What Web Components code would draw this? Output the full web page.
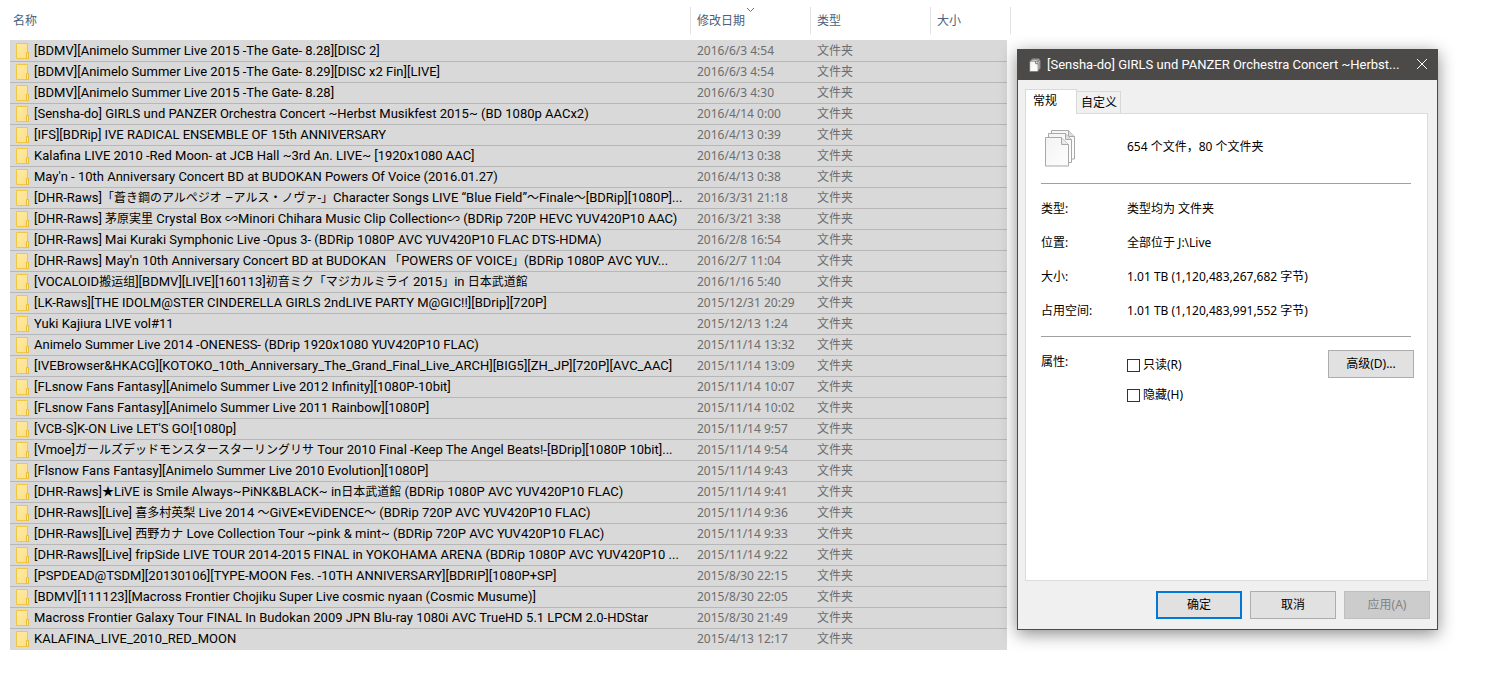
<!DOCTYPE html>
<html lang="zh-CN">
<head>
<meta charset="utf-8">
<meta name="viewport" content="width=device-width, initial-scale=1">
<title>Live</title>
<style>
  body {
    margin: 0;
    background: #fff;
    color: #000;
    font: 12px/20px "Noto Sans", "Noto Sans CJK SC", sans-serif;
  }
</style>
</head>
<body>
<explorer-desktop>
  <file-list></file-list>
  <property-sheet slot="dialog">
    <span slot="title">[Sensha-do] GIRLS und PANZER Orchestra Concert ~Herbst...</span>
    <property-row summary><files-icon slot="label" size="38"></files-icon>654 个文件，80 个文件夹</property-row>
    <hr>
    <property-row><span slot="label">类型:</span>类型均为 文件夹</property-row>
    <property-row><span slot="label">位置:</span>全部位于 J:\Live</property-row>
    <property-row><span slot="label">大小:</span>1.01 TB (1,120,483,267,682 字节)</property-row>
    <property-row><span slot="label">占用空间:</span>1.01 TB (1,120,483,991,552 字节)</property-row>
    <hr>
    <attribute-group></attribute-group>
    <push-button slot="actions" primary>确定</push-button>
    <push-button slot="actions">取消</push-button>
    <push-button slot="actions" disabled>应用(A)</push-button>
  </property-sheet>
</explorer-desktop>

<script>
const define = (name, html, setup) => customElements.define(name, class extends HTMLElement {
  constructor() {
    super();
    this.attachShadow({ mode: 'open' }).innerHTML = html;
  }
  connectedCallback() {
    if (setup && !this.ready) { this.ready = true; setup(this, this.shadowRoot); }
  }
});

define('explorer-desktop', `
  <style>
    :host { display: flex; align-items: flex-start; gap: 10px; padding: 0 57px 39px 10px; }
    main { flex: 1; min-width: 0; }
    aside { flex: 0 1 421px; min-width: 0; padding-top: 49px; }
  </style>
  <main><slot></slot></main>
  <aside><slot name="dialog"></slot></aside>
`);

define('folder-icon', `
  <style>
    :host { display: block; flex: none; width: 13px; height: 16px; }
    svg { display: block; }
  </style>
  <svg width="13" height="16" viewBox="0 0 13 16">
    <defs><linearGradient id="g" x1="0" y1="0" x2="1" y2="1">
      <stop offset="0" stop-color="#ffeaa4"/><stop offset="1" stop-color="#fddf86"/>
    </linearGradient></defs>
    <path d="M.5.5h11v9h1v6H.5z" fill="url(#g)" stroke="#efc742"/>
    <path d="M10.500 15.500v-6h2v6z" fill="#ffe9a2" stroke="#e9bd35"/>
  </svg>
`);

define('files-icon', `
  <style>
    :host { display: block; flex: none; --line: #a8a8a8; --weight: 1; }
    :host([small]) { --line: #5c5a58; --weight: 2; }
    svg { display: block; }
    g { stroke: var(--line); stroke-width: var(--weight); }
  </style>
  <svg viewBox="0 0 38 38">
    <defs><linearGradient id="p" x1="0" y1="0" x2="1" y2="1">
      <stop offset="0" stop-color="#f3f3f3"/><stop offset="1" stop-color="#fefefe"/>
    </linearGradient></defs>
    <g fill="url(#p)" stroke-linejoin="round">
      <path d="M10.500 1.500h17l6 6v22.500h-23z"/><path d="M27.500 1.500v6h6" fill="#ddd"/>
      <path d="M7.500 4.500h17l6 6v23h-23z"/><path d="M24.500 4.500v6h6" fill="#ddd"/>
      <path d="M4.500 8.500h16l7 7v21.500h-23z"/><path d="M20.500 8.500v7h7" fill="#e8e8e8"/>
    </g>
  </svg>
`, (host, root) => {
  const svg = root.querySelector('svg');
  svg.setAttribute('width', host.getAttribute('size'));
  svg.setAttribute('height', host.getAttribute('size'));
});

const folders = [
  ['[BDMV][Animelo Summer Live 2015 -The Gate- 8.28][DISC 2]', '2016/6/3 4:54'],
  ['[BDMV][Animelo Summer Live 2015 -The Gate- 8.29][DISC x2 Fin][LIVE]', '2016/6/3 4:54'],
  ['[BDMV][Animelo Summer Live 2015 -The Gate- 8.28]', '2016/6/3 4:30'],
  ['[Sensha-do] GIRLS und PANZER Orchestra Concert ~Herbst Musikfest 2015~ (BD 1080p AACx2)', '2016/4/14 0:00'],
  ['[IFS][BDRip] IVE RADICAL ENSEMBLE OF 15th ANNIVERSARY', '2016/4/13 0:39'],
  ['Kalafina LIVE 2010 -Red Moon- at JCB Hall ~3rd An. LIVE~ [1920x1080 AAC]', '2016/4/13 0:38'],
  ["May'n - 10th Anniversary Concert BD at BUDOKAN Powers Of Voice (2016.01.27)", '2016/4/13 0:38'],
  ['[DHR-Raws]「蒼き鋼のアルペジオ –アルス・ノヴァ-」Character Songs LIVE “Blue Field”～Finale～[BDRip][1080P]...', '2016/3/31 21:18'],
  ['[DHR-Raws] 茅原実里 Crystal Box ∽Minori Chihara Music Clip Collection∽ (BDRip 720P HEVC YUV420P10 AAC)', '2016/3/21 3:38'],
  ['[DHR-Raws] Mai Kuraki Symphonic Live -Opus 3- (BDRip 1080P AVC YUV420P10 FLAC DTS-HDMA)', '2016/2/8 16:54'],
  ["[DHR-Raws] May'n 10th Anniversary Concert BD at BUDOKAN 「POWERS OF VOICE」(BDRip 1080P AVC YUV...", '2016/2/7 11:04'],
  ['[VOCALOID搬运组][BDMV][LIVE][160113]初音ミク「マジカルミライ 2015」in 日本武道館', '2016/1/16 5:40'],
  ['[LK-Raws][THE IDOLM@STER CINDERELLA GIRLS 2ndLIVE PARTY M@GIC!!][BDrip][720P]', '2015/12/31 20:29'],
  ['Yuki Kajiura LIVE vol#11', '2015/12/13 1:24'],
  ['Animelo Summer Live 2014 -ONENESS- (BDrip 1920x1080 YUV420P10 FLAC)', '2015/11/14 13:32'],
  ['[IVEBrowser&HKACG][KOTOKO_10th_Anniversary_The_Grand_Final_Live_ARCH][BIG5][ZH_JP][720P][AVC_AAC]', '2015/11/14 13:09'],
  ['[FLsnow Fans Fantasy][Animelo Summer Live 2012 Infinity][1080P-10bit]', '2015/11/14 10:07'],
  ['[FLsnow Fans Fantasy][Animelo Summer Live 2011 Rainbow][1080P]', '2015/11/14 10:02'],
  ["[VCB-S]K-ON Live LET'S GO![1080p]", '2015/11/14 9:57'],
  ['[Vmoe]ガールズデッドモンスタースターリングリサ Tour 2010 Final -Keep The Angel Beats!-[BDrip][1080P 10bit]...', '2015/11/14 9:54'],
  ['[Flsnow Fans Fantasy][Animelo Summer Live 2010 Evolution][1080P]', '2015/11/14 9:43'],
  ['[DHR-Raws]★LiVE is Smile Always~PiNK&BLACK~ in日本武道館 (BDRip 1080P AVC YUV420P10 FLAC)', '2015/11/14 9:41'],
  ['[DHR-Raws][Live] 喜多村英梨 Live 2014 ～GiVE×EViDENCE～ (BDRip 720P AVC YUV420P10 FLAC)', '2015/11/14 9:36'],
  ['[DHR-Raws][Live] 西野カナ Love Collection Tour ~pink & mint~ (BDRip 720P AVC YUV420P10 FLAC)', '2015/11/14 9:33'],
  ['[DHR-Raws][Live] fripSide LIVE TOUR 2014-2015 FINAL in YOKOHAMA ARENA (BDRip 1080P AVC YUV420P10 ...', '2015/11/14 9:22'],
  ['[PSPDEAD@TSDM][20130106][TYPE-MOON Fes. -10TH ANNIVERSARY][BDRIP][1080P+SP]', '2015/8/30 22:15'],
  ['[BDMV][111123][Macross Frontier Chojiku Super Live cosmic nyaan (Cosmic Musume)]', '2015/8/30 22:05'],
  ['Macross Frontier Galaxy Tour FINAL In Budokan 2009 JPN Blu-ray 1080i AVC TrueHD 5.1 LPCM 2.0-HDStar', '2015/8/30 21:49'],
  ['KALAFINA_LIVE_2010_RED_MOON', '2015/4/13 12:17'],
];

define('file-list', `
  <style>
    :host { display: block; }
    table { width: 100%; table-layout: fixed; border-collapse: separate; border-spacing: 0; }
    .fixed { width: 120px; }
    .size { width: 77px; }
    th { position: relative; box-sizing: border-box; height: 40px; padding: 2px 0 0; text-align: left; font-weight: normal; color: #4c607a; }
    th + th { padding-left: 7px; }
    th:first-child { padding-left: 3px; }
    th::after { content: ""; position: absolute; top: 7px; right: -1px; width: 1px; height: 27px; background: #e2e2e2; }
    th:last-child::after { right: -4px; }
    th svg { position: absolute; top: 7px; left: 56px; }
    td { height: 20px; padding: 0; background: #d9d9d9; border-bottom: 1px solid #b7b7b7; color: #6d6d6d; white-space: nowrap; }
    td + td { padding-left: 7px; }
    tr:first-child td { border-top: 1px solid #d9d9d9; }
    tr:last-child td { border-bottom-color: #d9d9d9; }
    .name { display: flex; align-items: center; gap: 5px; height: 20px; padding: 0 5px 0 6px; color: #000; }
    .label { overflow: hidden; text-overflow: ellipsis; font: 13px/20px Roboto, "Noto Sans CJK SC", sans-serif; }
    .wide { font-size: 12px; line-height: 1; }
  </style>
  <table>
    <colgroup><col><col class="fixed"><col class="fixed"><col class="size"></colgroup>
    <thead><tr>
      <th scope="col">名称</th>
      <th scope="col">修改日期<svg width="9" height="6" viewBox="0 0 9 6"><path d="M1 1l3.500 3.500L8 1" fill="none" stroke="#6d6d6d"/></svg></th>
      <th scope="col">类型</th>
      <th scope="col">大小</th>
    </tr></thead>
    <tbody></tbody>
  </table>
`, (host, root) => {
  const body = root.querySelector('tbody');
  for (const [name, date] of folders) {
    const row = body.insertRow();
    const cell = document.createElement('div');
    cell.className = 'name';
    const label = document.createElement('span');
    label.className = 'label';
    // Runs of East Asian characters are set one size below the Latin text.
    name.split(/([\u2600-\u26ff\u3000-\u9fff\uff00-\uffef]+)/).forEach((part, i) => {
      if (i % 2 === 0) { label.append(part); return; }
      const wide = document.createElement('span');
      wide.className = 'wide';
      wide.textContent = part;
      label.append(wide);
    });
    cell.append(document.createElement('folder-icon'), label);
    row.insertCell().append(cell);
    row.insertCell().textContent = date;
    row.insertCell().textContent = '文件夹';
    row.insertCell();
  }
});

define('property-sheet', `
  <style>
    :host { display: block; border: 1px solid #4c4a48; background: #f0f0f0; box-shadow: 0 4px 16px rgba(0, 0, 0, .45); }
    header { display: flex; align-items: center; gap: 5px; height: 30px; padding: 0 9px 0 10px; background: #4c4a48; color: #fff; }
    h1 { flex: 1; min-width: 0; margin: 0; font: 13px/20px Roboto, "Noto Sans CJK SC", sans-serif; overflow: hidden; text-overflow: ellipsis; white-space: nowrap; }
    .close { flex: none; width: 12px; height: 20px; margin-left: 4px; padding: 0; border: 0; background: none; }
    .close svg { display: block; }
    nav { display: flex; align-items: flex-end; padding: 9px 9px 0 7px; }
    nav button { box-sizing: border-box; height: 22px; padding: 0 3px 0 4px; border: 1px solid #d9d9d9; border-bottom: 0; border-left: 0; background: #f0f0f0; color: #000; font: inherit; }
    nav .on { position: relative; z-index: 1; height: 25px; margin-bottom: -1px; padding: 0 19px 2px 7px; border-left: 1px solid #d9d9d9; background: #fff; }
    section { box-sizing: border-box; min-height: 468px; margin: 0 9px 0 7px; padding: 15px 13px 15px 15px; border: 1px solid #dcdcdc; background: #fff; }
    footer { display: flex; justify-content: flex-end; gap: 8px; padding: 10px 7px; }
    ::slotted(hr) { height: 1px; margin: 15px 3px 15px 0; border: 0; background: #a0a0a0; }
  </style>
  <header>
    <files-icon size="14" small></files-icon>
    <h1><slot name="title"></slot></h1>
    <button class="close" aria-label="关闭"><svg width="12" height="20" viewBox="0 0 12 20"><path d="M1 4l10 10M11 4L1 14" stroke="#fff" fill="none"/></svg></button>
  </header>
  <nav><button class="on">常规</button><button>自定义</button></nav>
  <section><slot></slot></section>
  <footer><slot name="actions"></slot></footer>
`);

define('property-row', `
  <style>
    :host { display: grid; grid-template-columns: 86px 1fr; align-items: center; min-height: 20px; margin-bottom: 14px; }
    :host([summary]) { align-items: start; min-height: 39px; }
    :host([summary]) div { padding-top: 8px; }
  </style>
  <slot name="label"></slot><div><slot></slot></div>
`);

define('push-button', `
  <style>
    :host { display: block; flex: none; width: 86px; }
    button { box-sizing: border-box; width: 100%; height: 28px; padding: 0; border: 1px solid #adadad; background: #e1e1e1; color: #000; font: inherit; }
    :host([primary]) button { border: 2px solid #0078d7; }
    button:disabled { border-color: #bfbfbf; background: #ccc; color: #838383; }
  </style>
  <button><slot></slot></button>
`, (host, root) => { root.querySelector('button').disabled = host.hasAttribute('disabled'); });

define('attribute-group', `
  <style>
    :host { display: grid; grid-template-columns: 86px 1fr auto; align-items: start; }
    .boxes { display: grid; gap: 10px; padding-top: 3px; }
    label { display: flex; align-items: center; gap: 3px; }
    input { appearance: none; box-sizing: border-box; width: 13px; height: 13px; margin: 0; border: 1px solid #333; background: #fff; }
    push-button { margin-top: -2px; }
  </style>
  <span id="caption">属性:</span>
  <div class="boxes" role="group" aria-labelledby="caption">
    <label><input type="checkbox">只读(R)</label>
    <label><input type="checkbox">隐藏(H)</label>
  </div>
  <push-button>高级(D)...</push-button>
`);
</script>
</body>
</html>
